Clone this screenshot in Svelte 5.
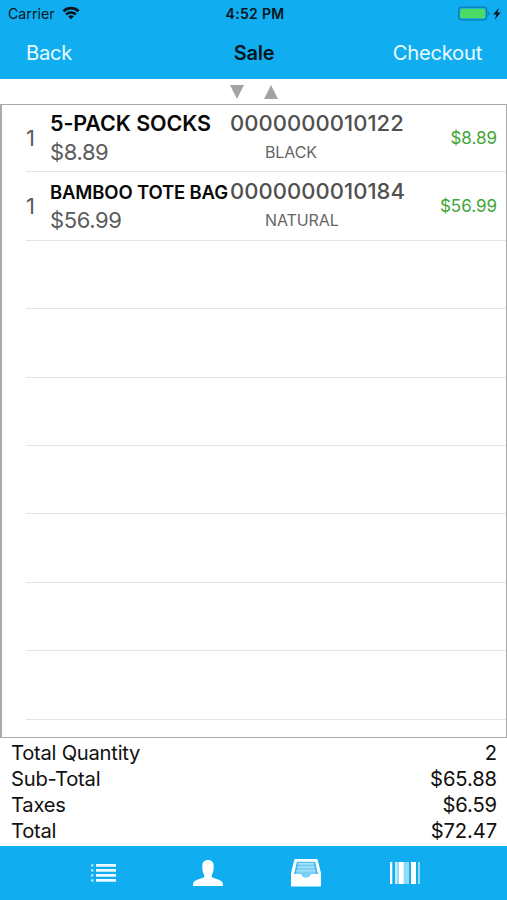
<script lang="ts">
	interface Item {
		qty: number;
		name: string;
		small?: boolean;
		price: string;
		sku: string;
		variant: string;
		total: string;
	}

	const items: Item[] = [
		{ qty: 1, name: '5-PACK SOCKS', price: '$8.89', sku: '0000000010122', variant: 'BLACK', total: '$8.89' },
		{ qty: 1, name: 'BAMBOO TOTE BAG', small: true, price: '$56.99', sku: '0000000010184', variant: 'NATURAL', total: '$56.99' }
	];

	const emptyRows = 7;

	const totals = [
		{ label: 'Total Quantity', value: '2' },
		{ label: 'Sub-Total', value: '$65.88' },
		{ label: 'Taxes', value: '$6.59' },
		{ label: 'Total', value: '$72.47' }
	];
</script>

<div class="screen">
	<header>
		<div class="status">
			<div class="carrier">
				<span>Carrier</span>
				<svg width="18" height="14" viewBox="0 0 18 14" fill="none" stroke="#06151c" stroke-width="2.6">
					<path d="M1.4 5.2a11 11 0 0 1 15.2 0" />
					<path d="M4.1 8.5a7 7 0 0 1 9.8 0" />
					<path d="M9 13.300 6.200 10.500a4 4 0 0 1 5.600 0z" fill="#06151c" stroke="none" />
				</svg>
			</div>
			<span class="time">4:52 PM</span>
			<div class="battery">
				<svg width="44" height="16" viewBox="0 0 44 16">
					<rect x="0.7" y="1.2" width="28" height="12.6" rx="3" fill="none" stroke="#087cae" stroke-width="1.3" />
					<rect x="2.2" y="2.7" width="25" height="9.6" rx="1.6" fill="#4cd964" />
					<path d="M30.2 5.4a2.4 2.4 0 0 1 0 4.4z" fill="#087cae" />
					<path d="M41 1.8 35.2 8.6h3.2l-1.6 4.8 6-6.8h-3.4z" fill="#06151c" />
				</svg>
			</div>
		</div>
		<nav class="navbar">
			<button class="back">Back</button>
			<h1>Sale</h1>
			<button class="checkout">Checkout</button>
		</nav>
	</header>

	<div class="sorter">
		<svg width="14" height="14" viewBox="0 0 14 14"><path d="M0 0h14L7 14z" fill="#a3a3a3" /></svg>
		<svg width="14" height="14" viewBox="0 0 14 14"><path d="M0 14h14L7 0z" fill="#a3a3a3" /></svg>
	</div>

	<main>
		{#each items as item}
			<div class="row">
				<span class="qty">{item.qty}</span>
				<div class="product">
					<span class="name" class:small={item.small}>{item.name}</span>
					<span class="price">{item.price}</span>
				</div>
				<div class="details">
					<span class="sku">{item.sku}</span>
					<span class="variant">{item.variant}</span>
				</div>
				<span class="total">{item.total}</span>
			</div>
		{/each}
		{#each Array(emptyRows) as _}
			<div class="row"></div>
		{/each}
	</main>

	<section class="totals">
		{#each totals as line}
			<div class="line">
				<span class="label">{line.label}</span>
				<span class="value">{line.value}</span>
			</div>
		{/each}
	</section>

	<footer>
		<button aria-label="List">
			<svg width="26" height="20" viewBox="0 0 26 20" fill="#fff">
				<path d="M5 1h20v2.7H5zM5 6h20v2.7H5zM5 11h20v2.7H5zM5 16h20v2.7H5z" opacity="0.92" />
				<path d="M0 1.2h2.4v2.3H0zM0 6.2h2.4v2.3H0zM0 11.2h2.4v2.3H0zM0 16.2h2.4v2.3H0z" opacity="0.72" />
			</svg>
		</button>
		<button aria-label="Customer">
			<svg width="30" height="27" viewBox="0 0 30 27" fill="#fff">
				<path d="M15 0c3.700 0 5.700 2.100 5.700 6.200 0 4-.5 6.500-1.700 8.300-.7 1.200-.5 2.400.5 3 2.300 1.300 5.700 1.800 8.300 3.200 1.700 1 2.200 2.300 2.200 5.300H0c0-3 .5-4.300 2.200-5.300 2.600-1.400 6-1.900 8.300-3.200 1-.6 1.200-1.800.5-3C9.800 12.700 9.300 10.200 9.300 6.200 9.300 2.100 11.300 0 15 0z" />
			</svg>
		</button>
		<button aria-label="Inbox">
			<svg width="30" height="28" viewBox="0 0 30 28">
				<path d="M4.8 0h20.400q1.400 0 1.700 1.400L30 14v12.500q0 1-1 1H1q-1 0-1-1V14L3.100 1.400Q3.400 0 4.800 0z" fill="#fff" />
				<path d="M6 2.700h18L27 15h-6.500q-1 0-1.500 1.200-.8 2-2.500 2h-3q-1.700 0-2.500-2Q10.500 15 9.500 15H3z" fill="#35b9f2" />
				<path d="M7.400 4.200h15.200L25 15h-4.500q-1 0-1.500 1.200-.8 2-2.500 2h-3q-1.700 0-2.500-2Q10.500 15 9.500 15H5z" fill="#78cff7" />
				<path d="M7.200 3.800h15.600l.4 1.600H6.800zM6.300 7.500h17.400l.3 1.400H6zM5.500 11h19l.3 1.400H5.200z" fill="#a5e0fa" />
			</svg>
		</button>
		<button aria-label="Scan">
			<svg width="30" height="22" viewBox="0 0 30 22" fill="#fff">
				<path d="M0 0h2.300v22H0zM9 0h4.800v22H9zM21 0h5v22h-5z" />
				<path d="M5 0h2.500v22H5zM28.200 0h1.500v22h-1.500z" opacity="0.75" />
				<path d="M7.500 0h1.500v22H7.500zM13.800 0h5.200v22h-5.200z" opacity="0.55" />
			</svg>
		</button>
	</footer>
</div>

<style>
	:global(body) {
		margin: 0;
	}

	.screen {
		display: flex;
		flex-direction: column;
		width: 507px;
		height: 900px;
		overflow: hidden;
		background: #fff;
		color: #111;
		font-family: Inter, 'Liberation Sans', sans-serif;
		white-space: nowrap;
	}

	button {
		padding: 0;
		border: none;
		background: none;
		font: inherit;
		letter-spacing: inherit;
	}

	svg {
		display: block;
	}

	header {
		height: 79px;
		flex: none;
		background: #10aef0;
	}

	.status {
		display: grid;
		grid-template-columns: 1fr auto 1fr;
		align-items: center;
		height: 28px;
		padding: 0 5px 0 8px;
		font-size: 14.2px;
		color: #06151c;
	}

	.carrier {
		display: flex;
		align-items: center;
		gap: 7px;
		margin-top: -1px;
	}

	.carrier svg {
		margin-top: -2px;
	}

	.time {
		margin-top: -2px;
		font-weight: 600;
		font-size: 14px;
		letter-spacing: 0.3px;
	}

	.battery {
		display: flex;
		justify-content: flex-end;
		margin-top: -1px;
	}

	.navbar {
		display: grid;
		grid-template-columns: 1fr auto 1fr;
		align-items: center;
		height: 48px;
		padding: 0 25px 0 26px;
		font-size: 20.2px;
		letter-spacing: -0.25px;
	}

	.navbar button {
		color: #e9fbff;
	}

	.back {
		justify-self: start;
	}

	.checkout {
		justify-self: end;
	}

	h1 {
		margin: 1px 0 0;
		font-size: 20px;
		font-weight: 600;
		color: #06151c;
	}

	.sorter {
		display: flex;
		justify-content: center;
		gap: 20px;
		flex: none;
		box-sizing: border-box;
		height: 25px;
		padding-top: 6px;
	}

	main {
		box-sizing: border-box;
		flex: none;
		height: 634px;
		overflow: hidden;
		border: solid #aaa;
		border-width: 1px 1px 1px 2px;
	}

	.row {
		display: grid;
		grid-template-columns: 25px 179px 1fr auto;
		align-items: center;
		box-sizing: border-box;
		height: 68.4px;
		margin-left: 24px;
		padding-right: 9px;
		border-bottom: 1px solid #e4e4e4;
	}

	.row:first-child {
		height: 67.4px;
	}

	.qty,
	.price {
		font-size: 22px;
		color: #5b5b5b;
	}

	.product,
	.details {
		display: flex;
		flex-direction: column;
		margin-top: -1px;
	}

	.product {
		margin-left: -1px;
	}

	.product span,
	.details span {
		height: 28px;
		line-height: 28px;
	}

	.product .name,
	.details .sku {
		line-height: 27px;
	}

	.product .name.small {
		line-height: 28px;
	}

	.name {
		font-size: 21.5px;
		font-weight: 600;
		letter-spacing: -0.1px;
		color: #080808;
	}

	.name.small {
		font-size: 18.5px;
		letter-spacing: -0.15px;
	}

	.product .price {
		letter-spacing: -0.4px;
	}

	.sku {
		font-size: 22px;
		font-weight: 500;
		letter-spacing: 0.05px;
		color: #505050;
	}

	.variant {
		padding-left: 35px;
		font-size: 16px;
		letter-spacing: -0.1px;
		color: #666;
	}

	.details .variant {
		line-height: 29px;
	}

	.total {
		font-size: 17px;
		color: #3fa535;
	}

	.totals {
		flex: none;
		box-sizing: border-box;
		height: 108px;
		padding: 2px 10px 0 11px;
		font-size: 20.2px;
	}

	.label {
		letter-spacing: -0.25px;
	}

	.value {
		letter-spacing: -0.1px;
	}

	.line {
		display: flex;
		justify-content: space-between;
		height: 26.1px;
		line-height: 26px;
	}

	footer {
		display: flex;
		align-items: center;
		gap: 68px;
		flex: 1;
		padding-left: 91px;
		background: #10aef0;
	}

	footer button:first-child {
		margin-right: 8px;
	}

	footer button:last-child {
		margin-left: 1px;
	}
</style>
